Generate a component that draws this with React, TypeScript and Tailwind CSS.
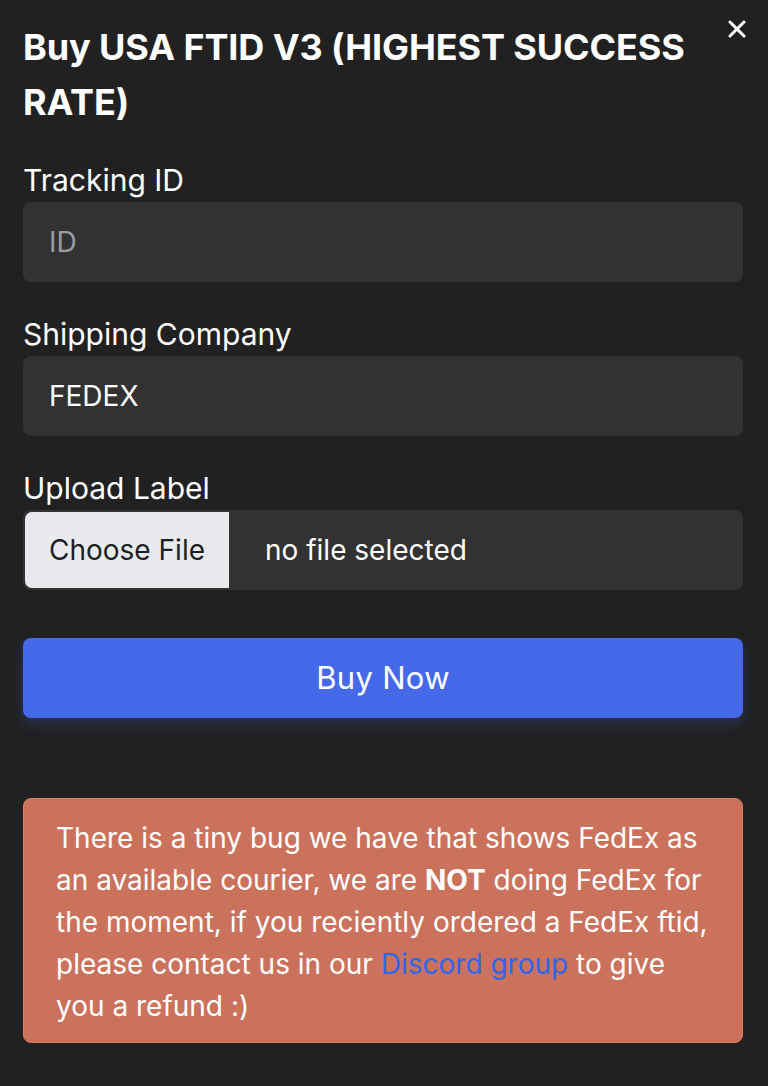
export default function App() {
  return (
    <div className="min-h-[1086px] w-full bg-[#212121] font-['Inter','Liberation_Sans',sans-serif] text-white">
      <div className="relative pl-[23px] pr-[25px] pt-[20px] pb-[40px]">
        {/* close */}
        <button className="absolute right-[20px] top-[18px] flex h-[22px] w-[22px] items-center justify-center text-white">
          <svg width="18" height="18" viewBox="0 0 18 18" fill="none">
            <path d="M2 2L16 16M16 2L2 16" stroke="white" strokeWidth="3" strokeLinecap="round" />
          </svg>
        </button>

        <h1 className="pr-[40px] text-[36px] font-bold leading-[55px] tracking-[-0.1px]">
          Buy USA FTID V3 (HIGHEST SUCCESS RATE)
        </h1>

        {/* Tracking ID */}
        <div className="mt-[32px]">
          <label className="block h-[36px] text-[30px] leading-[36px]">Tracking ID</label>
          <input
            placeholder="ID"
            className="mt-[4px] h-[80px] w-full rounded-[8px] bg-[#323232] px-[26px] text-[28px] text-white outline-none placeholder:text-[#9a9ca3]"
          />
        </div>

        {/* Shipping company */}
        <div className="mt-[34px]">
          <label className="block h-[36px] text-[30px] leading-[36px]">Shipping Company</label>
          <div className="mt-[4px] flex h-[80px] w-full items-center rounded-[8px] bg-[#323232] px-[26px] text-[28px]">
            FEDEX
          </div>
        </div>

        {/* Upload label */}
        <div className="mt-[34px]">
          <label className="block h-[36px] text-[30px] leading-[36px]">Upload Label</label>
          <div className="mt-[4px] flex h-[80px] w-full items-center rounded-[8px] bg-[#323232] p-[2px]">
            <div className="flex h-full w-[204px] items-center justify-center rounded-l-[7px] bg-[#e9eaee] text-[28px] text-[#1e1f24]">
              Choose File
            </div>
            <span className="ml-[36px] text-[28px]">no file selected</span>
          </div>
        </div>

        <button className="mt-[48px] flex h-[80px] w-full items-center justify-center rounded-[8px] bg-[#4569e8] text-[31px] tracking-[0.3px] text-white shadow-[0_6px_14px_rgba(69,105,232,0.25)]">
          Buy Now
        </button>

        <div className="mt-[80px] rounded-[8px] border border-[#de7c62] bg-[#cb725c] pl-[32px] pr-[26px] pt-[18px] pb-[15px] text-[28px] leading-[42px]">
          There is a tiny bug we have that shows FedEx as an available courier, we are{" "}
          <b className="font-bold">NOT</b> doing FedEx for the moment, if you reciently ordered a FedEx ftid,
          please contact us in our <a className="text-[#2f66f0]">Discord group</a> to give you a refund :)
        </div>
      </div>
    </div>
  );
}
